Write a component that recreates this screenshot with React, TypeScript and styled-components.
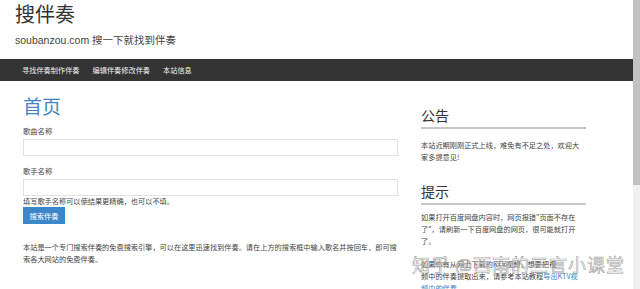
import React from "react";
import styled, { createGlobalStyle } from "styled-components";

const GlobalStyle = createGlobalStyle`
  html, body {
    margin: 0;
    padding: 0;
    background: #fff;
    overflow: hidden;
  }
  body {
    font-family: "Noto Sans CJK SC", "Liberation Sans", sans-serif;
    color: #333;
  }
`;

const Shell = styled.div`
  display: flex;
  width: 640px;
  height: 289px;
  overflow: hidden;
`;

const Page = styled.div`
  position: relative;
  flex: 1;
  min-width: 0;
`;

const Scrollbar = styled.div`
  width: 7px;
  background: #f1f1f1;
  display: flex;
  flex-direction: column;
`;

const Thumb = styled.div`
  height: 185px;
  background: #c1c1c1;
`;

const Header = styled.header`
  padding: 1px 0 0 15px;
  height: 59px;
  box-sizing: border-box;
`;

const SiteTitle = styled.h1`
  margin: 0;
  font-size: 20px;
  line-height: 26px;
  font-weight: 400;
  color: #333;
`;

const Tagline = styled.p`
  margin: 6px 0 0;
  font-family: "Liberation Sans", "Noto Sans CJK SC", sans-serif;
  font-size: 10.5px;
  line-height: 14px;
  color: #444;
`;

const NavBar = styled.nav`
  height: 22px;
  background: #333;
  display: flex;
  align-items: center;
  gap: 13px;
  padding-left: 22px;
`;

const NavItem = styled.a`
  color: #f0f0f0;
  font-size: 7.2px;
  line-height: 22px;
  text-decoration: none;
`;

const Main = styled.main`
  display: flex;
  gap: 23px;
  padding: 12px 0 0 23px;
`;

const LeftCol = styled.section`
  width: 375px;
`;

const RightCol = styled.aside`
  width: 165px;
  padding-top: 13px;
`;

const PageTitle = styled.h2`
  margin: 0;
  font-size: 19px;
  line-height: 26px;
  font-weight: 400;
  color: #3f83c6;
`;

const Label = styled.label<{ $top: number }>`
  display: block;
  font-size: 7.3px;
  line-height: 10px;
  color: #444;
  margin-top: ${(p) => p.$top}px;
`;

const Field = styled.div`
  height: 17px;
  border: 1px solid #e2e2e2;
  box-sizing: border-box;
  margin-top: 3px;
`;

const Help = styled.p`
  margin: 1px 0 0;
  font-size: 7.2px;
  line-height: 9px;
  color: #444;
`;

const SearchButton = styled.button`
  display: block;
  margin-top: 1px;
  width: 42px;
  height: 17px;
  border: none;
  padding: 0;
  background: #3c87c9;
  color: #fff;
  font-family: inherit;
  font-size: 7.3px;
`;

const About = styled.p`
  margin: 17px 0 0;
  font-size: 7.2px;
  line-height: 12px;
  color: #444;
`;

const WidgetTitle = styled.h3<{ $top: number }>`
  margin: ${(p) => p.$top}px 0 0;
  font-size: 14px;
  line-height: 18px;
  font-weight: 400;
  color: #333;
`;

const Rule = styled.hr`
  margin: 3px 0 0;
  border: none;
  height: 2px;
  background: #c8c8c8;
`;

const WidgetText = styled.p<{ $top: number }>`
  margin: ${(p) => p.$top}px 0 0;
  font-size: 7.2px;
  line-height: 12px;
  color: #444;
`;

const Link = styled.a`
  color: #3f83c6;
  text-decoration: none;
`;

const Watermark = styled.div`
  position: absolute;
  left: 412px;
  top: 253px;
  font-size: 18px;
  line-height: 22px;
  letter-spacing: 1px;
  color: rgba(255, 255, 255, 0.55);
  -webkit-text-stroke: 0.6px rgba(120, 120, 120, 0.75);
  white-space: nowrap;
  pointer-events: none;
`;

export default function App() {
  return (
    <>
      <GlobalStyle />
      <Shell>
        <Page>
          <Header>
            <SiteTitle>搜伴奏</SiteTitle>
            <Tagline>soubanzou.com 搜一下就找到伴奏</Tagline>
          </Header>
          <NavBar>
            <NavItem>寻找伴奏制作伴奏</NavItem>
            <NavItem>编辑伴奏修改伴奏</NavItem>
            <NavItem>本站信息</NavItem>
          </NavBar>
          <Main>
            <LeftCol>
              <PageTitle>首页</PageTitle>
              <Label $top={7}>歌曲名称</Label>
              <Field />
              <Label $top={10}>歌手名称</Label>
              <Field />
              <Help>填写歌手名称可以使结果更精确，也可以不填。</Help>
              <SearchButton>搜索伴奏</SearchButton>
              <About>
                本站是一个专门搜索伴奏的免费搜索引擎，可以在这里迅速找到伴奏。请在上方的搜索框中输入歌名并按回车，即可搜索各大网站的免费伴奏。
              </About>
            </LeftCol>
            <RightCol>
              <WidgetTitle $top={0}>公告</WidgetTitle>
              <Rule />
              <WidgetText $top={10}>
                本站近期刚刚正式上线，难免有不足之处，欢迎大家多提意见!
              </WidgetText>
              <WidgetTitle $top={19}>提示</WidgetTitle>
              <Rule />
              <WidgetText $top={6}>
                如果打开百度网盘内容时，网页报错"页面不存在了"，请刷新一下百度网盘的网页，很可能就打开了。
              </WidgetText>
              <WidgetText $top={11}>
                如果你有从网上下载的KTV视频，想要把视
                <br />
                频中的伴奏提取出来，请参考本站教程
                <Link>
                  导出KTV视
                  <br />
                  频中的伴奏
                </Link>
                。
              </WidgetText>
            </RightCol>
          </Main>
          <Watermark>知乎 @西南的三言小课堂</Watermark>
        </Page>
        <Scrollbar>
          <Thumb />
        </Scrollbar>
      </Shell>
    </>
  );
}
